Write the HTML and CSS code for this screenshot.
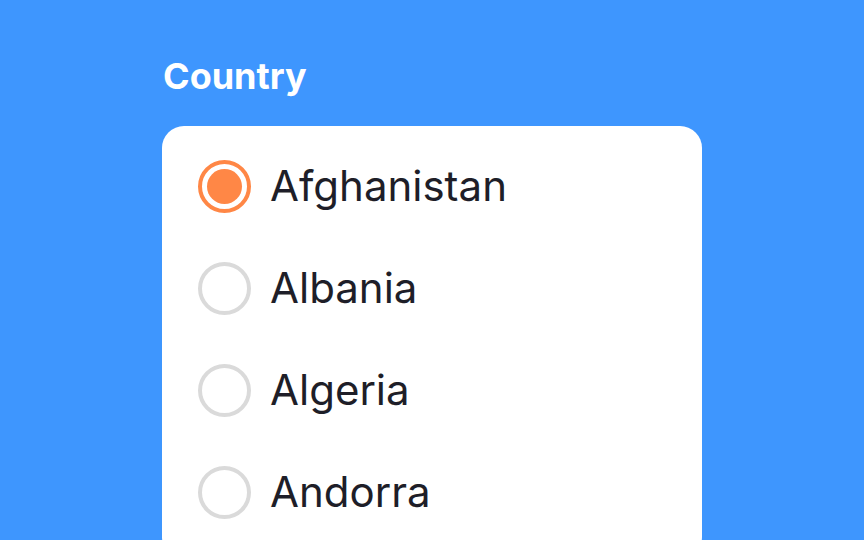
FILE: index.html
```html
<!DOCTYPE html>
<html>
<head>
<meta charset="utf-8">
<link rel="stylesheet" href="styles.css">
</head>
<body>
<div class="field">
  <div class="label">Country</div>
  <div class="card">
    <label class="option"><span class="radio checked"></span><span class="name">Afghanistan</span></label>
    <label class="option"><span class="radio"></span><span class="name">Albania</span></label>
    <label class="option"><span class="radio"></span><span class="name">Algeria</span></label>
    <label class="option"><span class="radio"></span><span class="name">Andorra</span></label>
  </div>
</div>
</body>
</html>
```
FILE: styles.css
```css
html, body {
  margin: 0;
  padding: 0;
  width: 864px;
  height: 540px;
  overflow: hidden;
  background: #3e96fe;
  font-family: Inter, "Noto Sans", sans-serif;
}
.field {
  padding: 54px 0 0 162px;
  width: 540px;
}
.label {
  color: #ffffff;
  font-weight: 700;
  font-size: 36px;
  line-height: 44px;
  padding-left: 1px;
  margin-bottom: 28px;
}
.card {
  background: #ffffff;
  border-radius: 22px;
  padding: 33px 36px 40px 36px;
  display: flex;
  flex-direction: column;
  gap: 48px;
}
.option {
  display: flex;
  align-items: center;
  gap: 19px;
  height: 54px;
}
.radio {
  box-sizing: border-box;
  width: 53px;
  height: 53px;
  border-radius: 50%;
  border: 4px solid #dadada;
  flex: none;
  position: relative;
}
.radio.checked {
  border-color: #ff8746;
}
.radio.checked::after {
  content: "";
  position: absolute;
  left: 5px;
  top: 5px;
  right: 5px;
  bottom: 5px;
  border-radius: 50%;
  background: #ff8746;
}
.name {
  color: #1e1e28;
  font-size: 42px;
  line-height: 50px;
}
```
